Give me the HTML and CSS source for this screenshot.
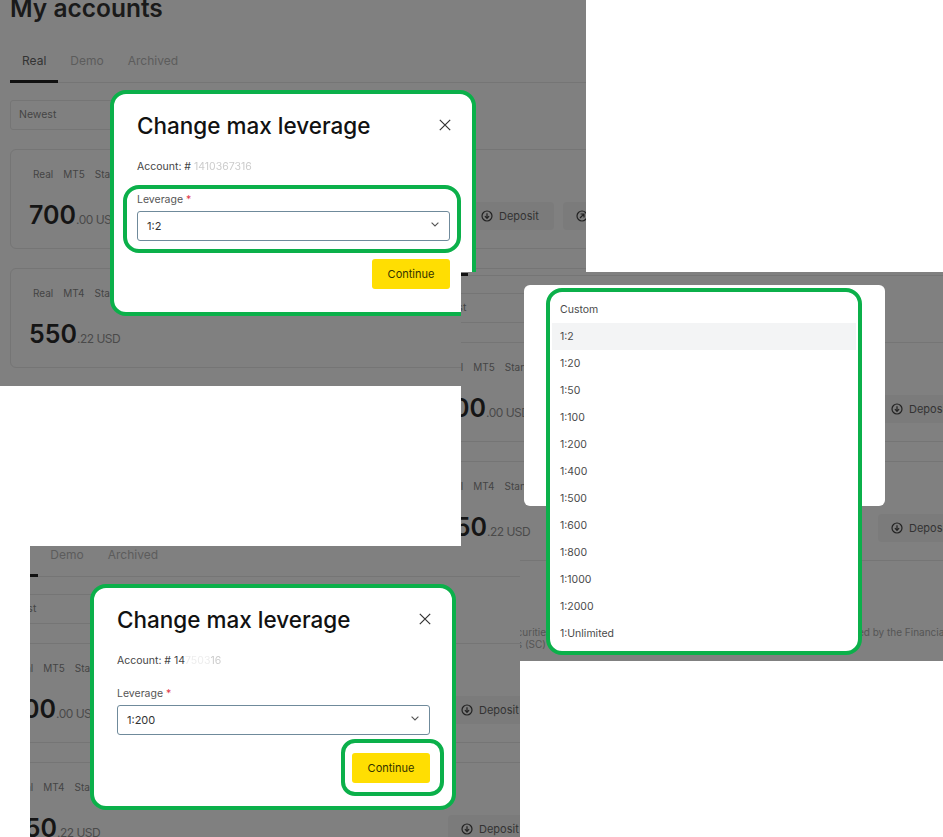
FILE: index.html

```html
<!DOCTYPE html>
<html lang="en">
<head>
  <meta charset="UTF-8" />
  <title>Change max leverage</title>
  <meta name="viewport" content="width=device-width, initial-scale=1.0" />
  <link rel="stylesheet" href="styles.css">
</head>
<body>
  <svg class="icon-defs" width="0" height="0">
    <symbol id="i-deposit" viewBox="0 0 12 12">
      <circle cx="6" cy="6" r="5" fill="none" stroke="currentColor" stroke-width="1.2" />
      <path d="M6 3.2v5M3.9 6.2 6 8.3l2.1-2.1" fill="none" stroke="currentColor" stroke-width="1.2" />
    </symbol>
    <symbol id="i-withdraw" viewBox="0 0 12 12">
      <circle cx="6" cy="6" r="5" fill="none" stroke="currentColor" stroke-width="1.2" />
      <path d="M4 8l4-4M4.6 4h3.4v3.4" fill="none" stroke="currentColor" stroke-width="1.2" />
    </symbol>
    <symbol id="i-close" viewBox="0 0 12 12">
      <path d="M.8.8l10.4 10.4M11.2.8.8 11.2" fill="none" stroke="currentColor" stroke-width="1.2" />
    </symbol>
    <symbol id="i-chevron" viewBox="0 0 8 5">
      <path d="M.6.6 4 4 7.4.6" fill="none" stroke="currentColor" stroke-width="1.1" />
    </symbol>
  </svg>

  <!-- first step: modal with the leverage field marked -->
  <section class="shot shot-first">
    <div class="page">
      <h1>My accounts</h1>
      <nav class="tabs">
        <a class="tab tab-active">Real</a>
        <a class="tab">Demo</a>
        <a class="tab">Archived</a>
      </nav>
      <div class="filter">Newest</div>
      <div class="card">
        <div class="card-info">
          <div class="tags"><span>Real</span><span>MT5</span><span>Standard</span></div>
          <div class="amount"><b>700</b>.00 USD</div>
        </div>
        <div class="actions">
          <a class="action"><svg class="action-icon"><use href="#i-deposit" /></svg>Deposit</a>
          <a class="action"><svg class="action-icon"><use href="#i-withdraw" /></svg>Withdraw</a>
        </div>
      </div>
      <div class="card">
        <div class="card-info">
          <div class="tags"><span>Real</span><span>MT4</span><span>Standard</span></div>
          <div class="amount"><b>550</b>.22 USD</div>
        </div>
        <div class="actions">
          <a class="action"><svg class="action-icon"><use href="#i-deposit" /></svg>Deposit</a>
          <a class="action"><svg class="action-icon"><use href="#i-withdraw" /></svg>Withdraw</a>
        </div>
      </div>

      <div class="modal modal-marked">
        <div class="modal-head">
          <h2>Change max leverage</h2>
          <svg class="close"><use href="#i-close" /></svg>
        </div>
        <p class="account">Account: # <span class="masked">1410367316</span></p>
        <div class="field">
          <span class="mark mark-field"></span>
          <label class="field-label">Leverage <em>*</em></label>
          <div class="select">1:2<svg class="chevron"><use href="#i-chevron" /></svg></div>
        </div>
        <div class="modal-foot">
          <button class="continue">Continue</button>
        </div>
      </div>
    </div>
  </section>

  <!-- second step: the open list of leverage values -->
  <section class="shot shot-second">
    <div class="page">
      <h1>My accounts</h1>
      <nav class="tabs">
        <a class="tab tab-active">Real</a>
        <a class="tab">Demo</a>
        <a class="tab">Archived</a>
      </nav>
      <div class="filter">Newest</div>
      <div class="card">
        <div class="card-info">
          <div class="tags"><span>Real</span><span>MT5</span><span>Standard</span></div>
          <div class="amount"><b>700</b>.00 USD</div>
        </div>
        <div class="actions">
          <a class="action"><svg class="action-icon"><use href="#i-deposit" /></svg>Deposit</a>
          <a class="action"><svg class="action-icon"><use href="#i-withdraw" /></svg>Withdraw</a>
        </div>
      </div>
      <div class="card">
        <div class="card-info">
          <div class="tags"><span>Real</span><span>MT4</span><span>Standard</span></div>
          <div class="amount"><b>550</b>.22 USD</div>
        </div>
        <div class="actions">
          <a class="action"><svg class="action-icon"><use href="#i-deposit" /></svg>Deposit</a>
          <a class="action"><svg class="action-icon"><use href="#i-withdraw" /></svg>Withdraw</a>
        </div>
      </div>
      <p class="legal">Exness (SC) is a Securities Dealer registered in the Republic of Seychelles, and it is authorised by the Financial Services Authority<br>Authority Seychelles (SC)</p>

      <div class="modal modal-blank"></div>
      <ul class="options">
        <li>Custom</li>
        <li class="option-hover">1:2</li>
        <li>1:20</li>
        <li>1:50</li>
        <li>1:100</li>
        <li>1:200</li>
        <li>1:400</li>
        <li>1:500</li>
        <li>1:600</li>
        <li>1:800</li>
        <li>1:1000</li>
        <li>1:2000</li>
        <li>1:Unlimited</li>
      </ul>
    </div>
  </section>

  <!-- third step: value picked, continue button marked -->
  <section class="shot shot-third">
    <div class="page">
      <h1>My accounts</h1>
      <nav class="tabs">
        <a class="tab tab-active">Real</a>
        <a class="tab">Demo</a>
        <a class="tab">Archived</a>
      </nav>
      <div class="filter">Newest</div>
      <div class="card">
        <div class="card-info">
          <div class="tags"><span>Real</span><span>MT5</span><span>Standard</span></div>
          <div class="amount"><b>700</b>.00 USD</div>
        </div>
        <div class="actions">
          <a class="action"><svg class="action-icon"><use href="#i-deposit" /></svg>Deposit</a>
          <a class="action"><svg class="action-icon"><use href="#i-withdraw" /></svg>Withdraw</a>
        </div>
      </div>
      <div class="card">
        <div class="card-info">
          <div class="tags"><span>Real</span><span>MT4</span><span>Standard</span></div>
          <div class="amount"><b>550</b>.22 USD</div>
        </div>
        <div class="actions">
          <a class="action"><svg class="action-icon"><use href="#i-deposit" /></svg>Deposit</a>
          <a class="action"><svg class="action-icon"><use href="#i-withdraw" /></svg>Withdraw</a>
        </div>
      </div>

      <div class="modal modal-marked">
        <div class="modal-head">
          <h2>Change max leverage</h2>
          <svg class="close"><use href="#i-close" /></svg>
        </div>
        <p class="account">Account: # 14<span class="masked masked-faint">7503</span><span class="masked">16</span></p>
        <div class="field">
          <label class="field-label">Leverage <em>*</em></label>
          <div class="select">1:200<svg class="chevron"><use href="#i-chevron" /></svg></div>
        </div>
        <div class="modal-foot">
          <button class="continue">Continue<span class="mark mark-button"></span></button>
        </div>
      </div>
    </div>
  </section>
</body>
</html>
```

FILE: styles.css

```css
:root {
  --overlay: #808080;
  --line: #757575;
  --ink: #111111;
  --green: #0bb04a;
  --yellow: #ffde02;
}

* {
  box-sizing: border-box;
}

body {
  margin: 0;
  background: #ffffff;
  font-family: Inter, "Liberation Sans", sans-serif;
  color: var(--ink);
  height: 837px;
  overflow: hidden;
  position: relative;
}

.icon-defs {
  position: absolute;
}

/* the three screenshots sit on a free canvas */
.shot {
  position: absolute;
  overflow: hidden;
  background: var(--overlay);
}

.shot-first {
  left: 0;
  top: 0;
  width: 586px;
  height: 386px;
}

.shot-second {
  left: 461px;
  top: 272px;
  width: 482px;
  height: 389px;
}

.shot-third {
  left: 30px;
  top: 546px;
  width: 490px;
  height: 291px;
}

.page {
  display: flow-root;
  position: relative;
  width: 900px;
  padding: 0 10px;
}

.shot-second .page {
  margin: -79px 0 0 -51px;
}

.shot-third .page {
  margin: -52px 0 0 -50px;
}

h1 {
  margin: -7px 0 0;
  font-size: 24.5px;
  line-height: 30px;
  font-weight: 600;
  color: #1a1a1a;
}

.tabs {
  display: flex;
  margin-top: 30px;
  border-bottom: 1px solid var(--line);
  height: 30px;
}

.tab {
  padding: 0 12px;
  height: 30px;
  font-size: 12px;
  line-height: 16px;
  color: #5c5c5c;
}

.tab-active {
  color: #333333;
  border-bottom: 3px solid #111111;
}

.filter {
  width: 200px;
  height: 30px;
  margin-top: 17px;
  padding-left: 8px;
  border: 1px solid var(--line);
  border-radius: 3px;
  font-size: 10.5px;
  line-height: 28px;
  color: #444444;
}

.card {
  display: flex;
  width: 880px;
  height: 100px;
  margin-top: 19px;
  border: 1px solid var(--line);
  border-radius: 6px;
}

.card-info {
  width: 457px;
  padding: 18px 0 0 18px;
}

.tags {
  display: flex;
  gap: 10px;
  padding-left: 4px;
  font-size: 10px;
  line-height: 12px;
  color: #444444;
}

.amount {
  margin-top: 19px;
  font-size: 12px;
  line-height: 32px;
  letter-spacing: -0.5px;
  color: #4a4a4a;
}

.amount b {
  font-size: 25px;
  font-weight: 600;
  letter-spacing: 0;
  color: #151515;
}

.actions {
  display: flex;
  gap: 9px;
  padding-top: 52px;
}

.action {
  display: flex;
  align-items: center;
  gap: 6px;
  height: 28px;
  padding: 0 15px 0 13px;
  background: #7b7b7b;
  border-radius: 4px;
  font-size: 11px;
  color: #333333;
}

.action-icon {
  width: 12px;
  height: 12px;
  color: #222222;
}

.legal {
  margin: 65px 0 0;
  padding-left: 5px;
  font-size: 10px;
  line-height: 12px;
  color: #555555;
  white-space: nowrap;
}

/* overlays */
.modal {
  position: absolute;
  background: #ffffff;
}

.modal-marked {
  left: 110px;
  top: 90px;
  width: 366px;
  height: 226px;
  padding: 16px 22px 0 23px;
  border: 4px solid var(--green);
  border-radius: 16px;
}

.modal-blank {
  left: 114px;
  top: 92px;
  width: 361px;
  height: 221px;
  border-radius: 6px;
}

.modal-head {
  display: flex;
  align-items: center;
  justify-content: space-between;
  height: 30px;
}

h2 {
  margin: 0;
  font-size: 22.5px;
  font-weight: 500;
  color: #111111;
}

.close {
  width: 12px;
  height: 12px;
  color: #333333;
  margin-right: -1px;
}

.account {
  margin: 19px 0 0;
  font-size: 10.5px;
  line-height: 16px;
  color: #444444;
}

.masked {
  color: #cccccc;
  filter: blur(0.7px);
}

.masked-faint {
  color: #ededed;
}

.field {
  position: relative;
  margin-top: 17px;
}

.field-label {
  display: block;
  font-size: 10.5px;
  line-height: 16px;
  color: #555555;
}

.field-label em {
  color: #e0394a;
  font-style: normal;
}

.select {
  display: flex;
  align-items: center;
  justify-content: space-between;
  height: 30px;
  margin-top: 3px;
  padding: 0 10px 0 9px;
  border: 1px solid #6f8a9b;
  border-radius: 3px;
  font-size: 11px;
  color: #333333;
}

.chevron {
  width: 8px;
  height: 5px;
  margin-top: -4px;
  color: #555555;
}

.modal-foot {
  display: flex;
  justify-content: flex-end;
  margin-top: 18px;
}

.continue {
  position: relative;
  width: 78px;
  height: 30px;
  padding: 0;
  border: none;
  border-radius: 3px;
  background: var(--yellow);
  font-family: inherit;
  font-size: 11px;
  color: #333300;
}

.mark {
  position: absolute;
  border: 4px solid var(--green);
  pointer-events: none;
}

.mark-field {
  left: -14px;
  right: -11px;
  top: -7px;
  bottom: -12px;
  border-radius: 16px;
}

.mark-button {
  left: -11px;
  right: -14px;
  top: -14px;
  bottom: -13px;
  border-radius: 14px;
}

.options {
  position: absolute;
  left: 136px;
  top: 95px;
  width: 316px;
  height: 367px;
  margin: 0;
  padding: 4px 2px;
  list-style: none;
  background: #ffffff;
  border: 4px solid var(--green);
  border-radius: 16px;
}

.options li {
  height: 27px;
  padding-left: 8px;
  font-size: 10.5px;
  line-height: 27px;
  color: #4a4a4a;
}

.options .option-hover {
  background: #f3f4f5;
}
```
